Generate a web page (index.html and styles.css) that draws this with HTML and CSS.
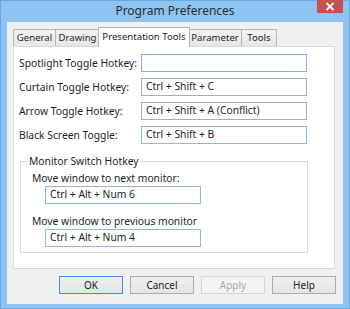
FILE: index.html
```html
<!DOCTYPE html>
<html lang="en">
<head>
    <meta charset="UTF-8">
    <title>Program Preferences</title>
    <link rel="stylesheet" href="styles.css">
</head>
<body>
    <div class="window">
        <div class="titlebar">
            <div class="title">Program Preferences</div>
            <svg class="win-close" width="26" height="13" viewBox="0 0 26 13">
                <rect x="0" y="0" width="26" height="13" fill="#c75050"/>
                <path d="M9.5 3L16.5 10M16.5 3L9.5 10" stroke="#ffffff" stroke-width="1.8"/>
            </svg>
        </div>

        <div class="client">
            <!-- Tabs -->
            <div class="tabs">
                <div class="tab t-general">General</div>
                <div class="tab t-drawing">Drawing</div>
                <div class="tab active">Presentation Tools</div>
                <div class="tab t-param">Parameter</div>
                <div class="tab t-tools">Tools</div>
            </div>

            <div class="panel">
                <div class="rows">
                    <label>Spotlight Toggle Hotkey:</label>
                    <div class="field focus"></div>
                    <label>Curtain Toggle Hotkey:</label>
                    <div class="field">Ctrl + Shift + C</div>
                    <label>Arrow Toggle Hotkey:</label>
                    <div class="field">Ctrl + Shift + A (Conflict)</div>
                    <label>Black Screen Toggle:</label>
                    <div class="field hover">Ctrl + Shift + B</div>
                </div>

                <fieldset class="group">
                    <legend>Monitor Switch Hotkey</legend>
                    <label>Move window to next monitor:</label>
                    <div class="field small hover">Ctrl + Alt + Num 6</div>
                    <label class="second">Move window to previous monitor</label>
                    <div class="field small hover">Ctrl + Alt + Num 4</div>
                </fieldset>
            </div>

            <div class="buttons">
                <button class="default">OK</button>
                <button>Cancel</button>
                <button disabled>Apply</button>
                <button>Help</button>
            </div>
        </div>
    </div>
</body>
</html>
```

FILE: styles.css
```css
body {
    margin: 0;
    padding: 0;
    font-family: "Noto Sans", Arial, sans-serif;
    font-size: 10.3px;
    color: #1e1e1e;
}

.window {
    width: 350px;
    height: 309px;
    box-sizing: border-box;
    background-color: #8ec4f2;
    border: 1px solid #6aa8e0;
    padding: 0 6px 4px 6px;
}

.titlebar {
    display: flex;
    height: 21px;
}

.title {
    flex: 1;
    padding-left: 26px;
    font-size: 12px;
    line-height: 19px;
    text-align: center;
    color: #2b2b2b;
}

.win-close {
    flex: none;
    display: block;
    margin-top: -1px;
}

.client {
    background-color: #f0f0f0;
    height: 282px;
    padding: 5px 7px 0 6px;
    box-sizing: border-box;
}

.tabs {
    display: flex;
    align-items: flex-end;
    height: 19px;
}

.tab {
    height: 17px;
    line-height: 15px;
    font-size: 9.6px;
    text-align: center;
    border: 1px solid #b5b5b5;
    border-bottom: none;
    border-right: none;
    background: linear-gradient(#f3f3f3, #e6e6e6);
    box-sizing: border-box;
}

.t-general { width: 42px; }
.t-drawing { width: 44px; }
.t-param { width: 52px; }
.t-tools { width: 36px; border-right: 1px solid #b5b5b5; }

.tab.active {
    width: 92px;
    height: 20px;
    line-height: 17px;
    background: white;
    margin: 0 -1px -1px -1px;
    border-right: 1px solid #b5b5b5;
    position: relative;
    z-index: 1;
}

.tab.active + .tab {
    border-left: none;
}

.panel {
    height: 223px;
    box-sizing: border-box;
    background-color: white;
    border: 1px solid #d9d9d9;
    width: 322px;
    padding: 7px 0 0 5px;
}

.rows {
    display: grid;
    grid-template-columns: 122px 166px;
    row-gap: 6px;
    align-items: center;
}

.field {
    height: 18px;
    box-sizing: border-box;
    border: 1px solid #adadad;
    line-height: 15px;
    padding: 0 4px;
}

.field.focus {
    border-color: #7eb4ea;
}

.field.hover {
    border-color: #8fb8e6;
}

.field.small {
    width: 156px;
    margin: 1px 0 0 13px;
}

.group {
    margin: 10px 0 0 1px;
    width: 288px;
    height: 99px;
    box-sizing: border-box;
    border: 1px solid #dcdcdc;
    padding: 0 0 0 11px;
}

.group legend {
    padding: 0 1px;
    margin-left: -4px;
}

.group label {
    display: block;
    margin-top: 3px;
}

.group label.second {
    margin-top: 10px;
}

.buttons {
    display: flex;
    justify-content: flex-end;
    gap: 7px;
    padding: 7px 0 0 0;
}

.buttons button {
    width: 64px;
    height: 18px;
    font-family: "Noto Sans", Arial, sans-serif;
    font-size: 10px;
    color: #1e1e1e;
    background: linear-gradient(#f0f0f0, #e5e5e5);
    border: 1px solid #acacac;
    padding: 0;
}

.buttons button.default {
    border-color: #3d8ee6;
}

.buttons button:disabled {
    color: #a8a8a8;
    background: #f4f4f4;
    border-color: #d5d5d5;
}
```
